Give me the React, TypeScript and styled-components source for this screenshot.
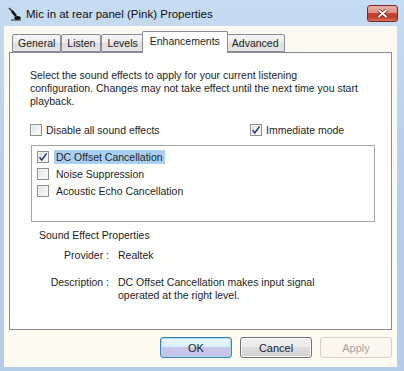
import styled, { createGlobalStyle } from "styled-components";

const Global = createGlobalStyle`
  html, body {
    margin: 0;
    padding: 0;
    background: #b9d1ea;
  }
  body {
    font-family: "Liberation Sans", Arial, sans-serif;
    font-size: 10.5px;
    color: #1e1e1e;
  }
`;

const Style = {
  Window: styled.div`
    width: 404px;
    height: 371px;
    display: flex;
    flex-direction: column;
    background: linear-gradient(180deg, #c6dcf2 0%, #b8d0ea 40%, #b3cce7 100%);
    box-sizing: border-box;
    overflow: hidden;
  `,
  TitleBar: styled.div`
    height: 26px;
    display: flex;
    align-items: center;
    padding-left: 8px;
    padding-right: 6px;
    flex-shrink: 0;
  `,
  TitleIcon: styled.svg`
    width: 15px;
    height: 16px;
    margin-right: 3px;
    margin-top: 1px;
  `,
  Title: styled.div`
    flex: 1;
    font-size: 11.5px;
    color: #101010;
    margin-top: 1px;
  `,
  Close: styled.div`
    width: 31px;
    height: 17px;
    box-sizing: border-box;
    border: 1px solid #7a2a22;
    border-radius: 3px;
    background: linear-gradient(
      180deg,
      #e8b1a8 0%,
      #dc8d80 45%,
      #c8422f 50%,
      #c24030 75%,
      #d9725f 100%
    );
    display: flex;
    align-items: center;
    justify-content: center;
  `,
  Body: styled.div`
    flex: 1;
    margin: 0 7px 4px 4px;
    background: #fcf9f0;
    padding: 5px 5px 9px 5px;
    display: flex;
    flex-direction: column;
  `,
  Tabs: styled.div`
    display: flex;
    align-items: flex-end;
    height: 21px;
    padding-left: 3px;
    position: relative;
    z-index: 1;
  `,
  Tab: styled.div<{ $active?: boolean }>`
    box-sizing: border-box;
    height: ${(p) => (p.$active ? "22px" : "18px")};
    margin: ${(p) => (p.$active ? "0 -2px -1px -2px" : "0")};
    padding: ${(p) => (p.$active ? "3px 7px 0 7px" : "2px 5px 0 5px")};
    border: 1px solid #898c95;
    border-bottom: ${(p) => (p.$active ? "none" : "1px solid #898c95")};
    border-radius: 2px 2px 0 0;
    background: ${(p) =>
      p.$active
        ? "#ffffff"
        : "linear-gradient(180deg, #f6f6f6 0%, #ebebeb 50%, #dddddd 51%, #e6e6e6 100%)"};
    position: relative;
    z-index: ${(p) => (p.$active ? 2 : 1)};
    font-size: 10.5px;
    color: #1e1e1e;
    white-space: nowrap;
  `,
  Panel: styled.div`
    flex: 1;
    border: 1px solid #898c95;
    background: #ffffff;
    padding: 16px 16px 0 20px;
    display: flex;
    flex-direction: column;
  `,
  Intro: styled.p`
    margin: 0;
    line-height: 13px;
    font-size: 10.5px;
  `,
  OptionsRow: styled.div`
    display: grid;
    grid-template-columns: 220px auto;
    margin-top: 15px;
  `,
  CheckLabel: styled.label`
    display: flex;
    align-items: center;
    gap: 4px;
    height: 13px;
  `,
  Box: styled.span`
    width: 12px;
    height: 12px;
    box-sizing: border-box;
    border: 1px solid #8e8f8f;
    background: linear-gradient(135deg, #dcdcdc 0%, #f4f4f4 60%, #ffffff 100%);
    box-shadow: inset 0 0 0 1px #f4f4f4;
    display: flex;
    align-items: center;
    justify-content: center;
    flex-shrink: 0;
  `,
  List: styled.div`
    margin: 9px 0 0 1px;
    height: 77px;
    border: 1px solid #a5a5a5;
    box-sizing: border-box;
    padding: 4px 5px;
    display: flex;
    flex-direction: column;
    gap: 4px;
  `,
  ListItem: styled.div`
    display: flex;
    align-items: center;
    gap: 5px;
    height: 13px;
  `,
  ItemText: styled.span<{ $selected?: boolean }>`
    padding: 1px 2px;
    background: ${(p) => (p.$selected ? "#a9d0f3" : "transparent")};
    color: #1e1e1e;
  `,
  GroupTitle: styled.div`
    margin: 7px 0 0 9px;
  `,
  PropGrid: styled.div`
    display: grid;
    grid-template-columns: 79px auto;
    column-gap: 9px;
    row-gap: 14px;
    margin-top: 8px;
    line-height: 13px;
  `,
  PropLabel: styled.div`
    text-align: right;
  `,
  PropValue: styled.div``,
  Buttons: styled.div`
    display: flex;
    justify-content: flex-end;
    gap: 8px;
    margin-top: 7px;
  `,
  Button: styled.button<{ $variant?: "default" | "normal" | "disabled" }>`
    width: 72px;
    height: 21px;
    box-sizing: border-box;
    border-radius: 3px;
    font-family: "Liberation Sans", Arial, sans-serif;
    font-size: 11px;
    padding: 0;
    border: 1px solid
      ${(p) =>
        p.$variant === "default"
          ? "#3c7fb1"
          : p.$variant === "disabled"
          ? "#d4d0c8"
          : "#707070"};
    color: ${(p) => (p.$variant === "disabled" ? "#a4a4a4" : "#1e1e1e")};
    background: ${(p) =>
      p.$variant === "default"
        ? "linear-gradient(180deg, #eaf6fd 0%, #d9f0fc 49%, #c8c6ea 50%, #c5c3e6 100%)"
        : p.$variant === "disabled"
        ? "#fbf7ee"
        : "linear-gradient(180deg, #f2f2f2 0%, #ebebeb 49%, #dddddd 50%, #cfcfcf 100%)"};
    box-shadow: ${(p) =>
      p.$variant === "default"
        ? "inset 0 0 0 1px #a7d9f5"
        : p.$variant === "disabled"
        ? "none"
        : "inset 0 0 0 1px #fcfcfc"};
  `,
};

const Check = () => (
  <svg width="10" height="10" viewBox="0 0 10 10">
    <path
      d="M1.5 5.2 L3.8 8 L8.6 1.4"
      fill="none"
      stroke="#2a3b6e"
      strokeWidth="1.6"
    />
  </svg>
);

function CheckBox({ checked }: { checked?: boolean }) {
  return <Style.Box>{checked && <Check />}</Style.Box>;
}

const tabs = ["General", "Listen", "Levels", "Enhancements", "Advanced"];
const effects = [
  { name: "DC Offset Cancellation", checked: true, selected: true },
  { name: "Noise Suppression", checked: false, selected: false },
  { name: "Acoustic Echo Cancellation", checked: false, selected: false },
];

export default function App() {
  return (
    <>
      <Global />
      <Style.Window>
        <Style.TitleBar>
          <Style.TitleIcon viewBox="0 0 15 16">
            {/* microphone icon */}
            <path d="M1 2 L5 6" stroke="#333" strokeWidth="1.6" />
            <path d="M4 5 L8 10" stroke="#111" strokeWidth="2.6" />
            <ellipse cx="9.5" cy="12" rx="3.2" ry="2" fill="#111" />
            <path d="M3 14 L13 14" stroke="#444" strokeWidth="1.2" />
          </Style.TitleIcon>
          <Style.Title>Mic in at rear panel (Pink) Properties</Style.Title>
          <Style.Close>
            <svg width="11" height="9" viewBox="0 0 11 9">
              <path
                d="M1.5 1 L9.5 8 M9.5 1 L1.5 8"
                stroke="#5a1a14"
                strokeWidth="3.2"
              />
              <path
                d="M1.5 1 L9.5 8 M9.5 1 L1.5 8"
                stroke="#ffffff"
                strokeWidth="1.8"
              />
            </svg>
          </Style.Close>
        </Style.TitleBar>

        <Style.Body>
          <Style.Tabs>
            {tabs.map((t) => (
              <Style.Tab key={t} $active={t === "Enhancements"}>
                {t}
              </Style.Tab>
            ))}
          </Style.Tabs>

          <Style.Panel>
            <Style.Intro>
              Select the sound effects to apply for your current listening
              <br />
              configuration. Changes may not take effect until the next time you start
              <br />
              playback.
            </Style.Intro>

            <Style.OptionsRow>
              <Style.CheckLabel>
                <CheckBox />
                Disable all sound effects
              </Style.CheckLabel>
              <Style.CheckLabel>
                <CheckBox checked />
                Immediate mode
              </Style.CheckLabel>
            </Style.OptionsRow>

            <Style.List>
              {effects.map((e) => (
                <Style.ListItem key={e.name}>
                  <CheckBox checked={e.checked} />
                  <Style.ItemText $selected={e.selected}>{e.name}</Style.ItemText>
                </Style.ListItem>
              ))}
            </Style.List>

            <Style.GroupTitle>Sound Effect Properties</Style.GroupTitle>

            <Style.PropGrid>
              <Style.PropLabel>Provider :</Style.PropLabel>
              <Style.PropValue>Realtek</Style.PropValue>
              <Style.PropLabel>Description :</Style.PropLabel>
              <Style.PropValue>
                DC Offset Cancellation makes input signal
                <br />
                operated at the right level.
              </Style.PropValue>
            </Style.PropGrid>
          </Style.Panel>

          <Style.Buttons>
            <Style.Button $variant="default">OK</Style.Button>
            <Style.Button $variant="normal">Cancel</Style.Button>
            <Style.Button $variant="disabled">Apply</Style.Button>
          </Style.Buttons>
        </Style.Body>
      </Style.Window>
    </>
  );
}
